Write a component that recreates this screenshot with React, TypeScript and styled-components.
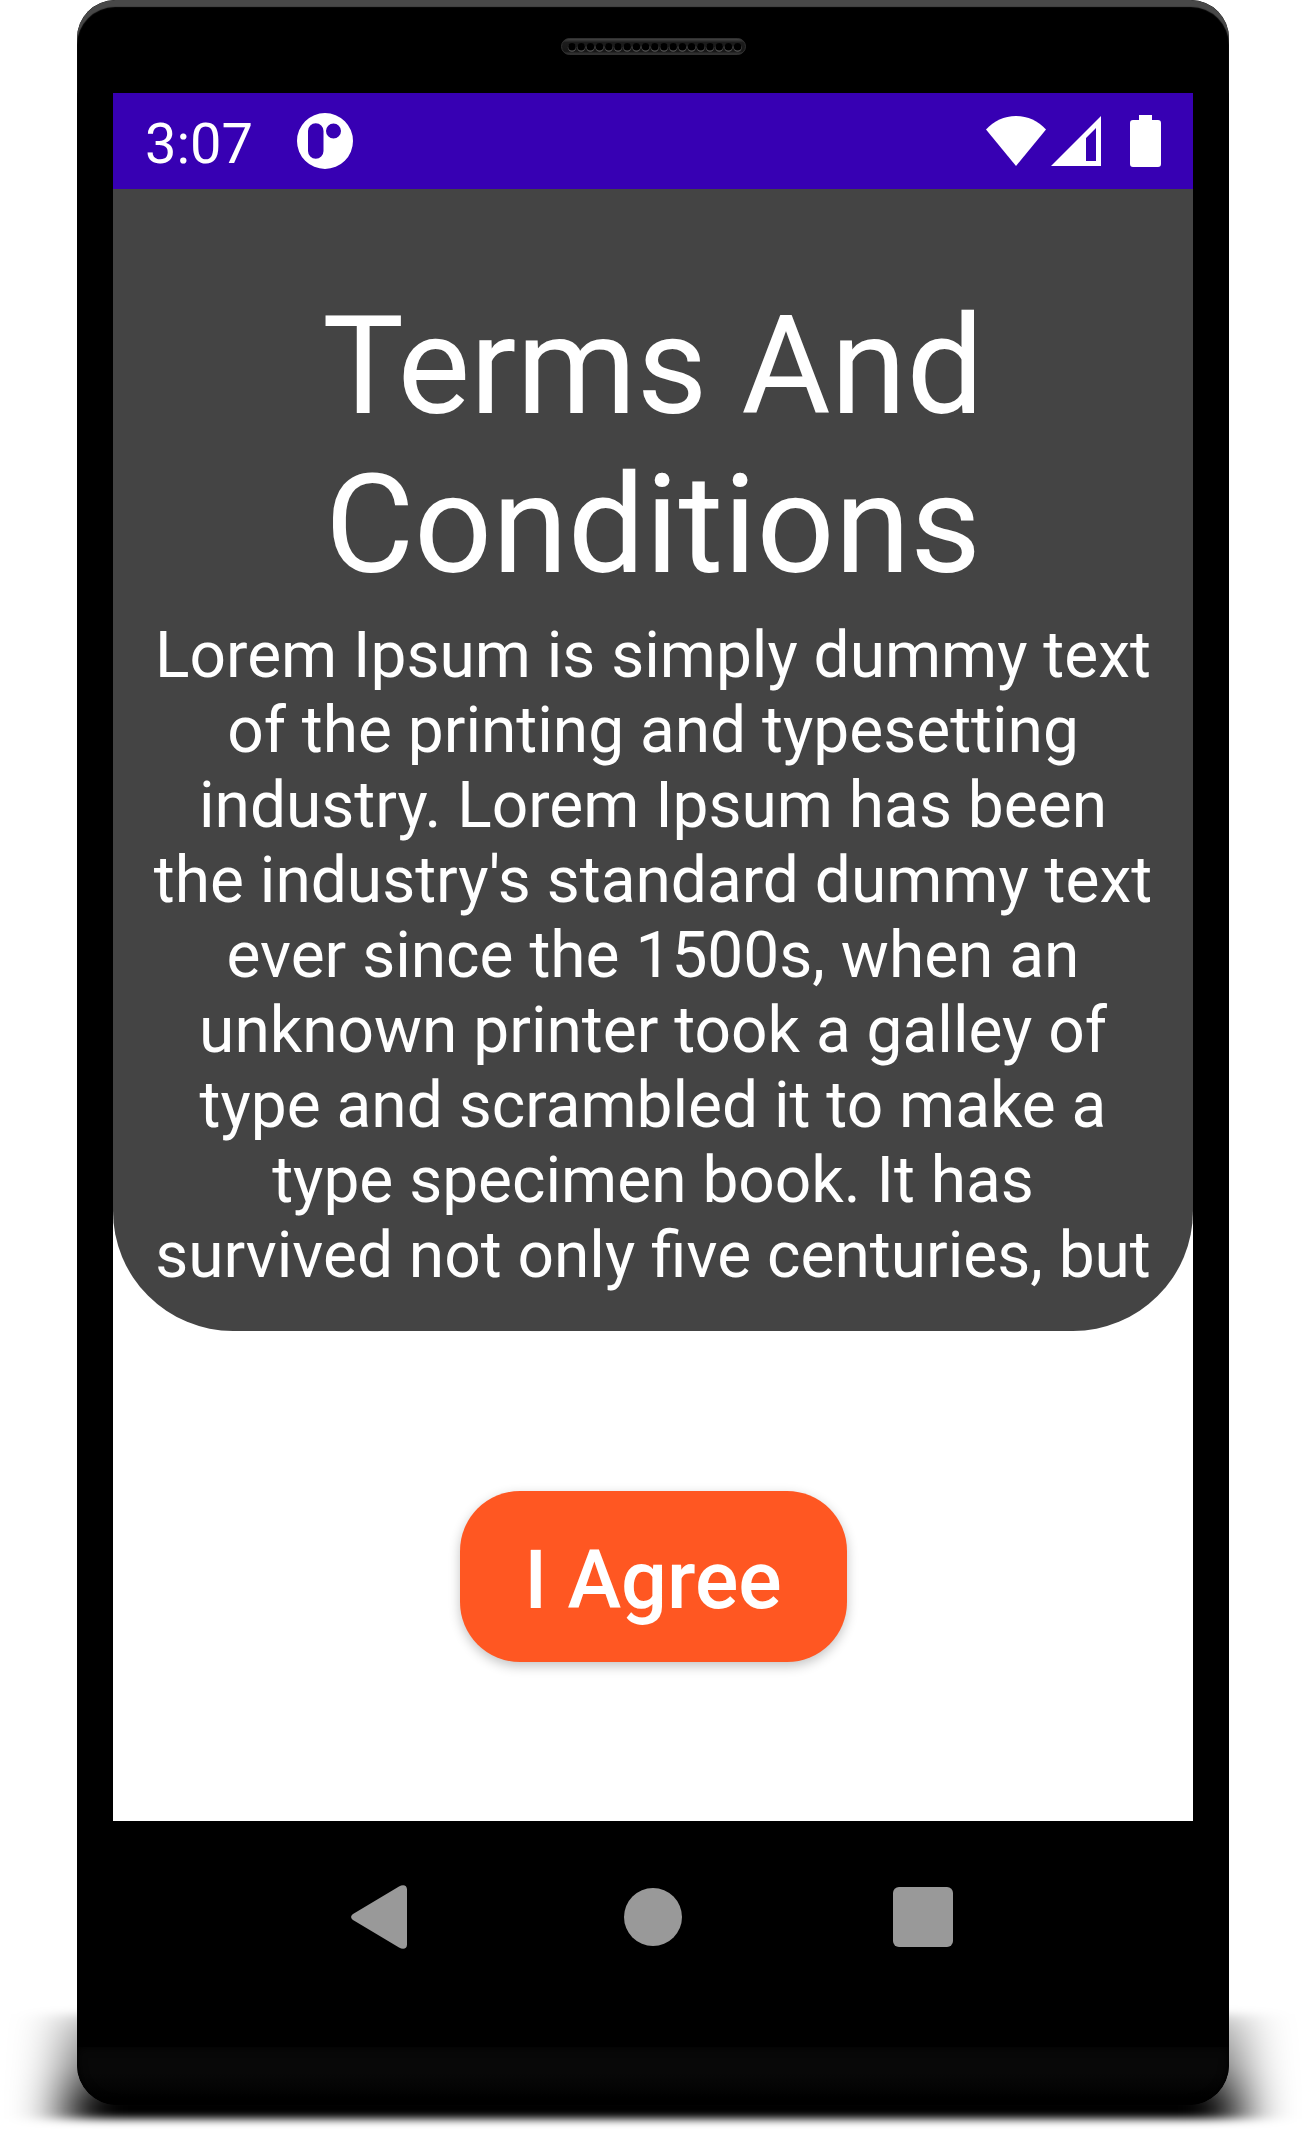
import React from "react";
import styled, { createGlobalStyle } from "styled-components";

const GlobalStyle = createGlobalStyle`
  *, *::before, *::after { box-sizing: border-box; }
  body {
    margin: 0;
    background: #ffffff;
    font-family: Roboto, "Liberation Sans", sans-serif;
  }
`;

const Page = styled.main`
  position: relative;
  padding: 0 76px 25px 77px;
  overflow: hidden;
`;

const GroundShadow = styled.svg`
  position: absolute;
  left: 0;
  bottom: 0;
  width: 100%;
  height: 150px;
`;

const Phone = styled.div`
  position: relative;
  display: flex;
  flex-direction: column;
  border-radius: 38px 38px 40px 40px;
  background: #000000;
  overflow: hidden;
`;

const TopBezel = styled.div`
  display: flex;
  justify-content: center;
  height: 93px;
  padding-top: 38px;
  border-radius: 38px 38px 0 0;
  box-shadow: inset 0 7px 1px #484848;
`;

const Speaker = styled.svg`
  width: 185px;
  height: 17px;
`;

const Screen = styled.section`
  display: flex;
  flex-direction: column;
  margin: 0 36px;
  background: #ffffff;
`;

const StatusBar = styled.header`
  display: flex;
  align-items: center;
  justify-content: space-between;
  height: 96px;
  padding: 0 32px;
  background: #3700b3;
  color: #ffffff;
`;

const StatusGroup = styled.div<{ $gap: number }>`
  display: flex;
  align-items: center;
  gap: ${({ $gap }) => $gap}px;
`;

const Clock = styled.time`
  padding-top: 5px;
  font-size: 56px;
  line-height: 64px;
`;

const Glyph = styled.svg`
  display: block;
  fill: currentColor;
`;

const TermsCard = styled.article`
  padding: 98px 40px 38px;
  border-radius: 0 0 120px 120px;
  background: #444444;
  color: #ffffff;
  text-align: center;
`;

const Title = styled.h1`
  margin: 0 0 13px;
  padding: 0 120px;
  font-size: 137px;
  font-weight: 400;
  line-height: 159px;
`;

const TermsText = styled.p`
  margin: 0;
  font-size: 64px;
  line-height: 75px;
`;

const Actions = styled.div`
  display: flex;
  justify-content: center;
  padding: 160px 0 159px;
`;

const AgreeButton = styled.button`
  min-width: 387px;
  height: 171px;
  padding: 8px 48px 0;
  border: 0;
  border-radius: 60px;
  background: #ff5722;
  box-shadow: 0 4px 12px rgba(0, 0, 0, 0.24);
  color: #ffffff;
  font-family: inherit;
  font-size: 81px;
  font-weight: 500;
  line-height: 94px;
  cursor: pointer;
`;

const NavBar = styled.nav`
  display: flex;
  justify-content: center;
  gap: 206px;
  padding: 64px 0 98px;
`;

const NavButton = styled.button`
  width: 64px;
  height: 64px;
  padding: 0;
  border: 0;
  background: transparent;
  color: #999999;
  cursor: pointer;
`;

const Chin = styled.div`
  height: 58px;
  border-radius: 0 0 40px 40px;
  background: linear-gradient(#080808 45%, #000000 95%);
  box-shadow: inset 0 0 10px #000000;
`;

const HOLES = Array.from({ length: 19 }, (_, i) => 11 + i * 9.2);

export default function App() {
  return (
    <>
      <GlobalStyle />
      <Page>
        <GroundShadow viewBox="0 0 1305 150" preserveAspectRatio="none" aria-hidden="true">
          <defs>
            <linearGradient id="ground" x1="0" y1="0" x2="0" y2="1">
              <stop offset="0" stopOpacity="0.2" />
              <stop offset="0.15" stopOpacity="0.36" />
              <stop offset="0.5" stopOpacity="0.6" />
              <stop offset="0.85" stopOpacity="1" />
            </linearGradient>
            <filter id="soften" x="-10%" y="-30%" width="120%" height="160%">
              <feGaussianBlur stdDeviation="26 4" />
            </filter>
          </defs>
          <path d="M66 34H1240V139H66Z" fill="url(#ground)" filter="url(#soften)" />
        </GroundShadow>
        <Phone>
          <TopBezel>
            <Speaker viewBox="0 0 185 17" aria-hidden="true">
              <defs>
                <linearGradient id="grille" x1="0" y1="0" x2="0" y2="1">
                  <stop offset="0" stopColor="#484848" />
                  <stop offset="0.25" stopColor="#1c1c1c" />
                  <stop offset="0.8" stopColor="#161616" />
                  <stop offset="1" stopColor="#3c3c3c" />
                </linearGradient>
              </defs>
              <rect x="0.5" y="0.5" width="184" height="16" rx="8" fill="url(#grille)" stroke="#303030" />
              {HOLES.map((x) => (
                <g key={x}>
                  <circle cx={x} cy="9.6" r="4.2" fill="#555555" />
                  <circle cx={x} cy="8.8" r="3.8" fill="#000000" />
                </g>
              ))}
            </Speaker>
          </TopBezel>
          <Screen>
            <StatusBar>
              <StatusGroup $gap={44}>
                <Clock>3:07</Clock>
                <Glyph width="56" height="56" viewBox="0 0 56 56" aria-hidden="true">
                  <path
                    fillRule="evenodd"
                    d="M28 0a28 28 0 1 1 0 56a28 28 0 0 1 0-56ZM11 18v20a7.7 7.7 0 0 0 15.5 0V18a7.7 7.7 0 0 0-15.500 0ZM36.500 10.500a7.500 7.500 0 1 0 0 15a7.500 7.500 0 0 0 0-15Z"
                  />
                </Glyph>
              </StatusGroup>
              <StatusGroup $gap={29}>
                <StatusGroup $gap={5}>
                  <Glyph width="60" height="50" viewBox="0 0 60 50" aria-label="Wi-Fi">
                    <path d="M0 13.500C8 5 18 0 30 0S52 5 60 13.500L30 50Z" />
                  </Glyph>
                  <Glyph width="50" height="50" viewBox="0 0 50 50" aria-label="Mobile signal">
                    <path fillRule="evenodd" d="M50 0V50H0ZM45 12L35 22V45H45Z" />
                  </Glyph>
                </StatusGroup>
                <Glyph width="31" height="52" viewBox="0 0 31 52" aria-label="Battery">
                  <path d="M9 0H22V5H28a3 3 0 0 1 3 3V49a3 3 0 0 1-3 3H3a3 3 0 0 1-3-3V8a3 3 0 0 1 3-3H9Z" />
                </Glyph>
              </StatusGroup>
            </StatusBar>
            <TermsCard>
              <Title>Terms And Conditions</Title>
              <TermsText>
                Lorem Ipsum is simply dummy text of the printing and typesetting industry. Lorem
                Ipsum has been the industry's standard dummy text ever since the 1500s, when an
                unknown printer took a galley of type and scrambled it to make a type specimen
                book. It has survived not only five centuries, but
              </TermsText>
            </TermsCard>
            <Actions>
              <AgreeButton type="button">I Agree</AgreeButton>
            </Actions>
          </Screen>
          <NavBar aria-label="System navigation">
            <NavButton type="button" aria-label="Back">
              <Glyph width="64" height="64" viewBox="0 0 64 64">
                <path d="M2 29L48 1.500C52-1 56 0 56 4.500V59.500C56 64 52 65 48 62.500L2 35C-0.500 33-0.500 31 2 29Z" />
              </Glyph>
            </NavButton>
            <NavButton type="button" aria-label="Home">
              <Glyph width="64" height="64" viewBox="0 0 64 64">
                <circle cx="32" cy="32" r="29" />
              </Glyph>
            </NavButton>
            <NavButton type="button" aria-label="Overview">
              <Glyph width="64" height="64" viewBox="0 0 64 64">
                <rect x="2" y="2" width="60" height="60" rx="6" />
              </Glyph>
            </NavButton>
          </NavBar>
          <Chin />
        </Phone>
      </Page>
    </>
  );
}
